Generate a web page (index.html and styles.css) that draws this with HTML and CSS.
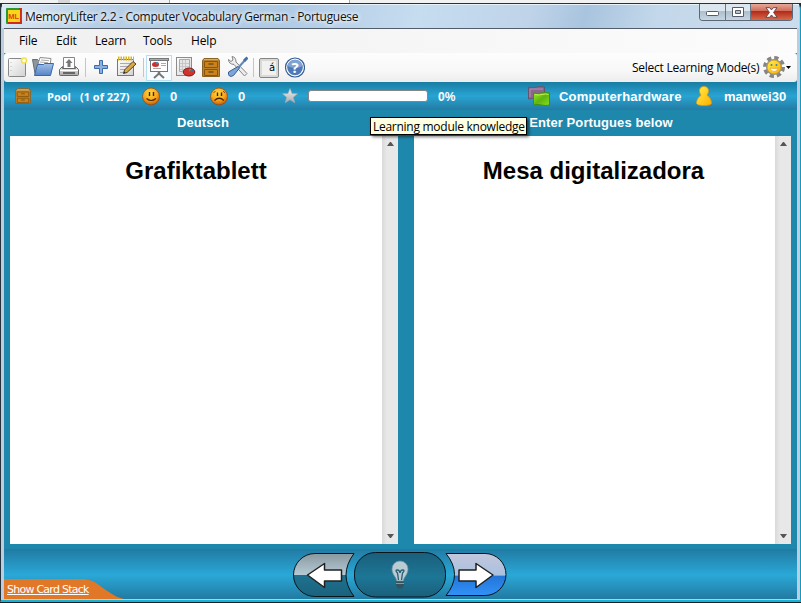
FILE: index.html
```html
<!DOCTYPE html>
<html lang="en">
<head>
<meta charset="utf-8">
<title>MemoryLifter 2.2 - Computer Vocabulary German - Portuguese</title>
<link rel="stylesheet" href="styles.css">
</head>
<body>
<svg class="defs" width="0" height="0">
  <defs>
    <linearGradient id="paper" x2="1" y2="1"><stop offset="0" stop-color="#fff"/><stop offset="1" stop-color="#d2d2d2"/></linearGradient>
    <linearGradient id="blue" x2="0" y2="1"><stop offset="0" stop-color="#a3c0e8"/><stop offset="1" stop-color="#5585c6"/></linearGradient>
    <linearGradient id="metal" x2="0" y2="1"><stop offset="0" stop-color="#f4f4f4"/><stop offset="1" stop-color="#a9a9a9"/></linearGradient>
    <radialGradient id="face" cx=".45" cy=".3" r=".75"><stop offset="0" stop-color="#ffd83e"/><stop offset=".55" stop-color="#f9a51c"/><stop offset="1" stop-color="#bd5006"/></radialGradient>
    <linearGradient id="person" x2="1" y2="1"><stop offset="0" stop-color="#fff04a"/><stop offset="1" stop-color="#ffae00"/></linearGradient>
    <linearGradient id="green" x2="1" y2="1"><stop offset="0" stop-color="#9af01c"/><stop offset=".5" stop-color="#5fb410"/><stop offset="1" stop-color="#85e21a"/></linearGradient>
    <linearGradient id="navPrev" x2="0" y2="1"><stop offset="0" stop-color="#8a989f"/><stop offset=".5" stop-color="#b5cbd6"/><stop offset=".51" stop-color="#20718f"/><stop offset="1" stop-color="#19627e"/></linearGradient>
    <linearGradient id="navNext" x2="0" y2="1"><stop offset="0" stop-color="#c3c7dc"/><stop offset=".52" stop-color="#a9c1e0"/><stop offset=".53" stop-color="#2374d6"/><stop offset="1" stop-color="#3292f8"/></linearGradient>
    <linearGradient id="navMid" x2="0" y2="1"><stop offset="0" stop-color="#1a5f7b"/><stop offset=".55" stop-color="#1d7696"/><stop offset="1" stop-color="#1b5f7a"/></linearGradient>
    <symbol id="drawers" viewBox="0 0 18 18">
      <path d="M3 .5h12l2.500 2v15H.5v-15z" fill="#b78233" stroke="#8a6427"/>
      <path d="M3 1.500h12l1.500 1.400h-15z" fill="#d5ad68"/>
      <path d="M2.500 4.500h13v5h-13zM2.500 11.500h13v5h-13z" fill="#cb8218" stroke="#8a560c"/>
      <path d="M7 6.500h4M7 13.500h4" stroke="#6e5325"/>
    </symbol>
  </defs>
</svg>
<div class="backdrop"><i></i><b></b></div>
<main class="window">
  <header class="titlebar">
    <svg class="app-icon" width="16" height="16" viewBox="0 0 16 16"><rect width="16" height="16" rx="1" fill="#2a9a30"/><path d="M13 0h3v16H2v-2h11z" fill="#d22a1c"/><rect x="2" y="2" width="12" height="12" fill="#fad51c"/><text x="2.3" y="10.6" class="app-letters">ML</text></svg>
    <h1>MemoryLifter 2.2 - Computer Vocabulary German - Portuguese</h1>
    <div class="controls">
      <span class="control minimize"><svg width="13" height="5"><rect x=".5" y=".5" width="12" height="4" rx="1" fill="#fff" stroke="#555c68"/></svg></span>
      <span class="control maximize"><svg width="12" height="10"><path d="M.5.5h11v9H.5z" fill="#fff" stroke="#555c68"/><path d="M3.500 3.500h5v3h-5z" fill="#b9c4d2" stroke="#555c68"/></svg></span>
      <span class="control close"><svg width="13" height="11" viewBox="0 0 13 11"><path d="M1 .7h3.700l1.800 2.200L8.300.7H12L8.600 5.400l3.500 4.900H8.400L6.500 8 4.600 10.300H.9l3.500-4.900z" fill="#fff" stroke="#664a4b"/></svg></span>
    </div>
  </header>
  <div class="client">
    <nav class="menu"><span>File</span><span>Edit</span><span>Learn</span><span>Tools</span><span>Help</span></nav>
    <div class="toolbar">
      <svg class="raised" width="22" height="24" viewBox="0 0 22 24"><rect x="1.500" y="4.500" width="17" height="18" rx="1" fill="url(#paper)" stroke="#888"/><path d="M4 8v.8M4 12v.8M4 16v.8" stroke="#aaa"/><circle cx="17" cy="6.500" r="2.500" fill="#fff" stroke="#f2e24a" stroke-width="1.600"/></svg>
      <svg class="raised" width="22" height="24" viewBox="0 0 22 24"><path d="M.5 5.500h5l1 1h10v13H3z" fill="#8e959b" stroke="#666e75"/><path d="M6 10 8 3.500l11 1-1 7z" fill="#fff" stroke="#8c8c8c"/><path d="m9 6 8 .7M8 8l8 .7" stroke="#aaa"/><path d="M5.500 10.500h6l1-1h9l-3 12H2.500z" fill="url(#blue)" stroke="#3868a9"/></svg>
      <svg class="raised" width="20" height="24" viewBox="0 0 20 24"><path d="M4.500 3.500h11v11h-11z" fill="#fff" stroke="#888"/><path d="m10 5 3.500 4h-2v4h-3V9h-2z" fill="#777"/><path d="m3.500 12.500-3 3v5q0 1 1 1h17q1 0 1-1v-5l-3-3v2h-13z" fill="url(#metal)" stroke="#666"/><path d="M1 16.500h18" stroke="#fff"/><rect x="4" y="18" width="12" height="2" fill="#666"/></svg>
      <i class="separator"></i>
      <svg class="raised" width="16" height="24" viewBox="0 0 16 24"><path d="M6.500 6.500h3v5h5v3h-5v5h-3v-5h-5v-3h5z" fill="#8bb0df" stroke="#3a6baf"/></svg>
      <svg class="raised" width="21" height="24" viewBox="0 0 21 24"><rect x="1.500" y="5.500" width="16" height="16" fill="url(#paper)" stroke="#777"/><path d="M4 9.500h11M4 12.500h9M4 15.500h7M4 18.500h7" stroke="#aaa"/><path d="M2 4.500h16" stroke="#d9b51c" stroke-width="4" stroke-dasharray="1.500 1"/><path d="m17 7.500 3 2.500-9 8.500-3.500 1 1-3.500z" fill="#dcaa42" stroke="#594020"/><path d="m7.500 19.500 1-2 1 1z" fill="#222"/></svg>
      <i class="separator"></i>
      <span class="selected"><svg width="20" height="22" viewBox="0 0 20 22"><rect x="1.500" y="3" width="17" height="11.500" fill="#fff" stroke="#777"/><rect x=".5" y="1.500" width="19" height="2" fill="#aaa" stroke="#777"/><ellipse cx="6.500" cy="7.500" rx="3.500" ry="2.500" fill="#d12d29"/><path d="M6.500 7.500 7 5q3 0 3 2z" fill="#398bc3"/><path d="M12 6.500h5M12 8.500h5M4 11.500h8" stroke="#aaa"/><path d="M1 14.500h18" stroke="#777"/><path d="m5 21 5-4.500 5 4.500" fill="none" stroke="#777" stroke-width="2"/><path d="M10 15v3" stroke="#777" stroke-width="2.500"/></svg></span>
      <svg class="raised" width="21" height="24" viewBox="0 0 21 24"><rect x="1.500" y="3.500" width="15" height="18" fill="url(#paper)" stroke="#8c8c8c"/><path d="M4.500 5.500h10v12h-10z" fill="#e6e6e6" stroke="#aaa"/><path d="M7.500 6v12M10.500 6v12M5 9.500h9M5 12.500h9M5 15.500h9" stroke="#c6c6c6"/><ellipse cx="14" cy="18" rx="5.800" ry="4" fill="#cf332c" stroke="#8a1714"/><path d="m14 18 0-3.500 3 .7z" fill="#4f9f41"/><path d="m14 18 3-2.800 2 2.300z" fill="#3e6fac"/></svg>
      <svg width="18" height="20" viewBox="0 0 18 20"><path d="M2 .5h14l1.500 2v16H.5v-16z" fill="#b78233" stroke="#8a6427"/><path d="M2.500 3.500h13v6h-13zM2.500 11.500h13v6h-13z" fill="#cb8218" stroke="#8a560c"/><path d="M2 1.500h14" stroke="#d5ad68"/><path d="M6.500 6h5M6.500 14h5" stroke="#6e5325" stroke-width="1.500"/></svg>
      <svg class="raised" width="21" height="24" viewBox="0 0 21 24"><path d="m1.500 5.500 2.500 2 2-1.500L5 2.500q4 .5 4 5.500l11 11.500-2.500 2.500L7 10.500Q1.500 10 1.500 5.500z" fill="#ededed" stroke="#858585"/><path d="m19 5-8 9" stroke="#6588b6" stroke-width="2"/><path d="M20.500 3.500 17 7" stroke="#4470a5" stroke-width="3"/><path d="m11 12.500 1.500 1.500-6 7.500q-2.500 1.500-4 .5T1.500 18z" fill="#7fa5d6" stroke="#365f97"/></svg>
      <i class="separator"></i>
      <span class="accent-key">á</span>
      <svg width="21" height="24" viewBox="0 0 21 24"><circle cx="11" cy="11.500" r="9.500" fill="#fff" stroke="#345c95" stroke-width="1.200"/><circle cx="11" cy="11.500" r="7.800" fill="#4d79b8"/><path d="M3.500 10a7.600 7.600 0 0 1 15 0q-7 4-15 0" fill="#7fa3d3"/><text x="11" y="17" text-anchor="middle" class="question">?</text></svg>
      <span class="mode">Select Learning Mode(s)</span>
      <svg width="22" height="24" viewBox="0 0 22 24"><circle cx="11" cy="11" r="9.300" fill="none" stroke="#848484" stroke-width="3.400" stroke-dasharray="4.300 3"/><circle cx="11" cy="11" r="8" fill="#8c8c8c"/><circle cx="11" cy="11" r="6.800" fill="url(#person)" stroke="#e2a500" stroke-width=".6"/><path d="M8.500 8v2M13.500 8v2" stroke="#4389aa" stroke-width="1.600"/><path d="M7 12q4 1.200 8 0-1 3.500-4 3.500T7 12" fill="#fff" stroke="#d89b22" stroke-width=".6"/></svg>
      <svg class="i-more" width="5" height="3"><path d="M0 0h5L2.500 3z"/></svg>
    </div>
    <section class="status">
      <svg width="16" height="16"><use href="#drawers"/></svg>
      <span class="pool">Pool</span><span class="count">(1 of 227)</span>
      <svg width="18" height="19" viewBox="0 0 18 19"><circle cx="9" cy="9.500" r="8.500" fill="url(#face)" stroke="#8e4712" stroke-width=".7"/><path d="M7.500 5v4M11.500 5v4" stroke="#3b2a12" stroke-width="1.400"/><path d="M4.500 11.500q4.700 4 9.400 0" fill="none" stroke="#4a270c" stroke-width="1.200"/></svg>
      <span>0</span>
      <svg width="18" height="19" viewBox="0 0 18 19"><circle cx="9" cy="9.500" r="8.500" fill="url(#face)" stroke="#8e4712" stroke-width=".7"/><path d="M7.500 5.500v3.500M11.500 5.500v3.500" stroke="#3b2a12" stroke-width="1.400"/><path d="M3.500 6 5.500 4M15 6l-2-2" stroke="#8e4e12"/><path d="M4.500 13.500q4.700-4.500 9.400 0" fill="none" stroke="#4a270c" stroke-width="1.200"/></svg>
      <span>0</span>
      <svg width="16" height="16" viewBox="0 0 16 16"><path d="m8 .5 2 5 5.500.3-4.200 3.500 1.500 5.500L8 11.700l-4.800 3.100 1.500-5.500L.5 5.800 6 5.500z" fill="url(#metal)" stroke="#a2abb2" stroke-width=".6"/></svg>
      <i class="progress"></i>
      <span class="percent">0%</span>
      <svg width="22" height="20" viewBox="0 0 22 20"><path d="M.5 1q4 1 8 0t8 0v12q-4 1-8 0t-8 0z" fill="#8b6790" stroke="#65546d"/><path d="M2 3h13M2 3v8" stroke="#ae91b2" fill="none"/><path d="M5.500 7q4 1 8 0t8 0v12q-4 1-8 0t-8 0z" fill="url(#green)" stroke="#408f13"/><path d="M7 8.500q3 1 7 0t6.500 0" stroke="#b7f14c" fill="none"/></svg>
      <span class="topic">Computerhardware</span>
      <svg width="16" height="20" viewBox="0 0 16 20"><path d="M8 .5c-3.300 0-4.800 2.300-4.500 5 .2 1.600 1 2.700 1.500 3.800C2.500 11 .5 14 .5 17c0 1.500 2 2.500 7.500 2.500s7.500-1 7.500-2.500c0-3-2-6-4.500-7.700.5-1.100 1.300-2.200 1.500-3.800.3-2.700-1.200-5-4.500-5z" fill="url(#person)" stroke="#dc9711" stroke-width=".8"/></svg>
      <span>manwei30</span>
    </section>
    <section class="cards">
      <h2 class="source">Deutsch</h2><h2 class="answer">Enter Portugues below</h2>
      <article class="card"><p>Grafiktablett</p><div class="scroll"><svg width="7" height="4"><path d="M3 0h1l3 4H0z"/></svg><svg width="7" height="4"><path d="M0 0h7L4 4H3z"/></svg></div></article>
      <article class="card"><p class="translation">Mesa digitalizadora</p><div class="scroll"><svg width="7" height="4"><path d="M3 0h1l3 4H0z"/></svg><svg width="7" height="4"><path d="M0 0h7L4 4H3z"/></svg></div></article>
    </section>
    <footer class="footer">
      <div class="stack"><svg width="120" height="20"><path d="M0 0h80c12 1 16 8 25 13 6 4 10 6 15 7H0z" fill="#e07828"/></svg><a>Show Card Stack</a></div>
      <svg class="navigation" width="214" height="46" viewBox="0 0 214 46">
        <path d="M61 1.500H22a21.500 21.500 0 0 0 0 43h39Q45 23 61 1.500z" fill="url(#navPrev)" stroke="#07151b"/>
        <path d="m14.500 23 17-11.500V18h17v11h-17v6.500z" fill="#fff" stroke="#202020" stroke-width="1.500" stroke-linejoin="round"/>
        <rect x="61.500" y=".5" width="91" height="44.500" rx="21" fill="url(#navMid)" stroke="#03141b"/>
        <path d="M103.500 29c0-4-4.500-6-4.500-12a8 8 0 0 1 16 0c0 6-4.500 8-4.500 12z" fill="#b9cbd3" stroke="#6c919e" stroke-width=".7"/>
        <path d="m105.500 28-1-7q-3-3 0-3 2 0 2.500 3 .5-3 2.500-3 3 0 0 3l-1 7" fill="none" stroke="#245e73" stroke-width="1.300"/>
        <path d="M103 29.500h8v4l-2 3h-4l-2-3z" fill="#315460"/><path d="M103 31.500h8" stroke="#809da7"/>
        <path d="M153 1.500h39a21 21 0 0 1 0 42h-39q17-21 0-42z" fill="url(#navNext)" stroke="#07151b"/>
        <path d="M200 23 183 11.500V18h-17v11h17v6.500z" fill="#fff" stroke="#202020" stroke-width="1.500" stroke-linejoin="round"/>
      </svg>
    </footer>
  </div>
</main>
<div class="tooltip">Learning module knowledge</div>
</body>
</html>
```
FILE: styles.css
```css
* { box-sizing: border-box; }
body { margin: 0; width: 801px; height: 603px; overflow: hidden; display: flex; flex-direction: column; font-family: "Open Sans", "Noto Sans", sans-serif; background: #222a32; }
svg { display: block; }
.defs { position: absolute; }
h1, h2, p { margin: 0; font-weight: 400; }
span, h1, h2, p, a { white-space: nowrap; }
.backdrop { height: 3px; flex: none; background: #f2f2f2; display: flex; justify-content: flex-start; }
.backdrop i { margin-left: 58px; width: 12px; background: #d7d7d7; }
.backdrop b { margin-left: 99px; width: 181px; border: solid #aaa; border-width: 0 1px; background: #fff; }
.window { height: 599px; border: 1px solid #26323c; border-right-color: #129bc0; border-bottom: 2px solid #16b3d4; border-radius: 6px 6px 0 0; padding: 0 3px 1px; background: #bbcddf; display: flex; flex-direction: column; box-shadow: 0 1px #15202a; }
.titlebar { height: 24px; flex: none; display: flex; align-items: flex-start; padding-left: 3px; margin: 0 -2px; border-top: 1px solid #e8f2fa; background: linear-gradient(105deg, #dce8f3 0, #b7cfe6 12%, #aecae5 35%, #c6dcef 52%, #bfd4e9 66%, #a9c4df 73%, #c3d8ea 82%, #cbdced 100%); }
.app-icon { margin: 3px 3px 0 1px; }
.app-letters { font: bold 7.500px "Liberation Sans"; fill: #e43d13; }
.titlebar h1 { font-size: 12px; line-height: 16px; margin-top: 4px; letter-spacing: -.3px; color: #111; text-shadow: 0 0 5px #fff, 0 0 5px #fff; }
.controls { display: flex; margin: -1px 6px 0 auto; width: 94px; height: 17px; border: 1px solid #5c6877; border-top: 0; border-radius: 0 0 4px 4px; overflow: hidden; }
.control { display: flex; align-items: center; justify-content: center; background: linear-gradient(#dce6ef 0 45%, #aebfcd 46%, #c6d5e2); border-right: 1px solid #687685; }
.minimize { width: 26px; padding-top: 3px; }
.maximize { width: 25px; }
.close { flex: 1; border: 0; background: linear-gradient(#e6a998, #cf6856 45%, #b22b18 46%, #d66a4d); }
.client { flex: 1; min-height: 0; border-top: 1px solid #525d69; margin-right: -1px; width: 793px; display: flex; flex-direction: column; background: #1d87ac; }
.menu { height: 24px; display: flex; align-items: center; padding: 0 0 1px 15px; background: linear-gradient(90deg, #f0f0f0, #fcfcfc); font-size: 12px; letter-spacing: -.15px; }
.menu span:nth-child(1) { width: 37px; }
.menu span:nth-child(2) { width: 39px; }
.menu span:nth-child(3) { width: 48px; }
.menu span:nth-child(4) { width: 48px; }
.toolbar { height: 29px; border-radius: 3px; background: linear-gradient(#fdfdfd, #f8f8f8 60%, #ededed); display: grid; align-items: center; grid-template-columns: 25px 27px 26px 8px 23px 27px 3px 29px 27px 25px 26px 6px 25px 348px 131px 23px 6px; padding-left: 3px; }
.raised { margin-top: -3px; }
.separator { width: 1px; height: 19px; background: #c5c5c5; }
.selected { width: 26px; height: 26px; display: grid; place-items: center; border: 1px solid #b8dfef; background: #f6fcff; }
.accent-key { width: 20px; height: 20px; border: 1px solid #858585; border-radius: 2px; background: #f1f1ef; box-shadow: inset 0 0 0 2px #d9d9d7; font: 10px/18px "DejaVu Sans"; padding-left: 9px; }
.question { font: bold 15px "Open Sans"; fill: #fff; }
.mode { font-size: 12px; letter-spacing: -.25px; }
.i-more { margin-left: 0; }
.status { height: 28px; background: linear-gradient(#197da3, #28a4d3 50%, #237ba3); display: grid; align-items: center; grid-template-columns: 32px 33px 62px 28px 40px 28px 44px 26px 130px 90px 31px 137px 28px 70px; padding-left: 11px; color: #fff; font: bold 13px/16px "Liberation Sans", sans-serif; }
.status span { padding-top: 1px; }
.pool, .count { font: bold 11px/16px "Open Sans"; }
.progress { width: 120px; height: 12px; background: #fff; border: 1px solid #858585; border-radius: 3px; }
.percent { font-size: 12px; }
.topic { letter-spacing: .22px; }
.cards { display: grid; grid-template: 26px 408px / 388px 377px; column-gap: 16px; padding: 0 6px; height: 439px; }
.cards h2 { font: bold 13px/26px "Liberation Sans", sans-serif; color: #fff; text-align: center; letter-spacing: .1px; }
.cards .source { padding-right: 2px; }
.cards .answer { padding-right: 3px; }
.card { background: #fff; display: flex; }
.card p { flex: 1; text-align: center; font: bold 24px/28px "Liberation Sans", sans-serif; padding-top: 21px; }
.card .translation { padding-right: 2px; }
.scroll { width: 16px; display: flex; flex-direction: column; justify-content: space-between; align-items: center; padding: 6px 0; background: linear-gradient(90deg, #d9d9d9, #e8e8e8 5px); }
.scroll svg { fill: #555; }
.footer { height: 50px; display: flex; align-items: flex-start; background: linear-gradient(#217ba3, #2aa8d7 52%, #227aa1); }
.stack { width: 289px; height: 20px; align-self: flex-end; display: grid; }
.stack > * { grid-area: 1 / 1; }
.stack a { color: #fff; font: 11px/18px "DejaVu Sans"; letter-spacing: -.75px; text-decoration: underline; padding: 2px 0 0 3px; }
.navigation { margin-top: 3px; }
.tooltip { position: absolute; left: 370px; top: 117px; width: 157px; height: 18px; border: 1px solid #000; background: #ffffe1; box-shadow: 2px 2px 3px #0008; font-size: 12px; line-height: 17px; padding-left: 2px; letter-spacing: -.27px; white-space: nowrap; }
```
